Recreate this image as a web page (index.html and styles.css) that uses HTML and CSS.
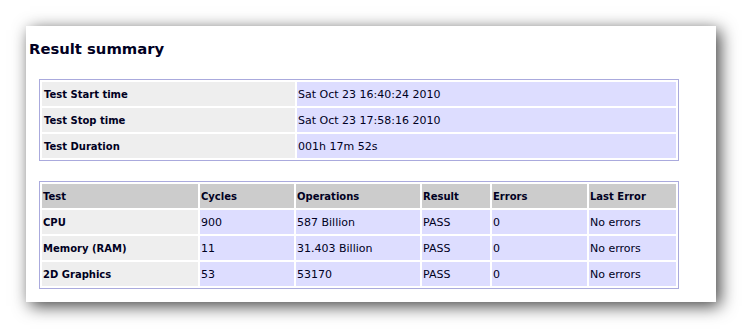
FILE: index.html
```html
<!DOCTYPE html>
<html lang="en">
<head>
  <meta charset="UTF-8" />
  <title>Result summary</title>
  <link rel="stylesheet" href="styles.css">
</head>
<body>
  <div class="report">
    <h1>Result summary</h1>

    <!-- Run times -->
    <table class="grid times">
      <colgroup>
        <col class="c-label">
        <col class="c-value">
      </colgroup>
      <tr><th>Test Start time</th><td>Sat Oct 23 16:40:24 2010</td></tr>
      <tr><th>Test Stop time</th><td>Sat Oct 23 17:58:16 2010</td></tr>
      <tr><th>Test Duration</th><td>001h 17m 52s</td></tr>
    </table>

    <!-- Per test results -->
    <table class="grid results">
      <colgroup>
        <col class="c-test">
        <col class="c-cycles">
        <col class="c-ops">
        <col class="c-result">
        <col class="c-errors">
        <col class="c-last">
      </colgroup>
      <tr class="head">
        <th>Test</th><th>Cycles</th><th>Operations</th><th>Result</th><th>Errors</th><th>Last Error</th>
      </tr>
      <tr><th>CPU</th><td>900</td><td>587 Billion</td><td>PASS</td><td>0</td><td>No errors</td></tr>
      <tr><th>Memory (RAM)</th><td>11</td><td>31.403 Billion</td><td>PASS</td><td>0</td><td>No errors</td></tr>
      <tr><th>2D Graphics</th><td>53</td><td>53170</td><td>PASS</td><td>0</td><td>No errors</td></tr>
    </table>
  </div>
</body>
</html>
```

FILE: styles.css
```css
/* ===== Page ===== */
* {
  box-sizing: border-box;
}
html, body {
  margin: 0;
  padding: 0;
  background: #fff;
  font-family: "DejaVu Sans", Verdana, sans-serif;
  color: #000;
}
body {
  min-height: 100vh;
  padding: 26px 0 27px 26px;
}

/* white sheet with a drop shadow */
.report {
  width: 690px;
  height: 276px;
  padding: 12px 0 0 0;
  background: #fff;
  box-shadow: 4px 4px 16px rgba(0, 0, 0, 0.75);
}
.report h1 {
  margin: 0 0 19px 3px;
  font-size: 14.8px;
  font-weight: bold;
  line-height: 22px;
  color: #000022;
}

/* ===== Tables ===== */
.grid {
  width: 640px;
  margin-left: 13px;
  border: 1px solid #aaaadd;
  border-spacing: 2px;
  table-layout: fixed;
  font-size: 11px;
  color: #000022;
}
.grid th,
.grid td {
  height: 24px;
  padding: 0 0 0 1px;
  text-align: left;
  vertical-align: middle;
  white-space: nowrap;
}
.grid th {
  background: #eeeeee;
  font-size: 10px;
  font-weight: bold;
}
.grid td {
  background: #ddddff;
}
.grid .head th {
  background: #cccccc;
}

.times {
  margin-bottom: 20px;
}
.times th {
  padding-left: 2px;
}
.c-label { width: 253px; }

.c-test { width: 156px; }
.c-cycles { width: 94px; }
.c-ops { width: 124px; }
.c-result { width: 68px; }
.c-errors { width: 95px; }
```
